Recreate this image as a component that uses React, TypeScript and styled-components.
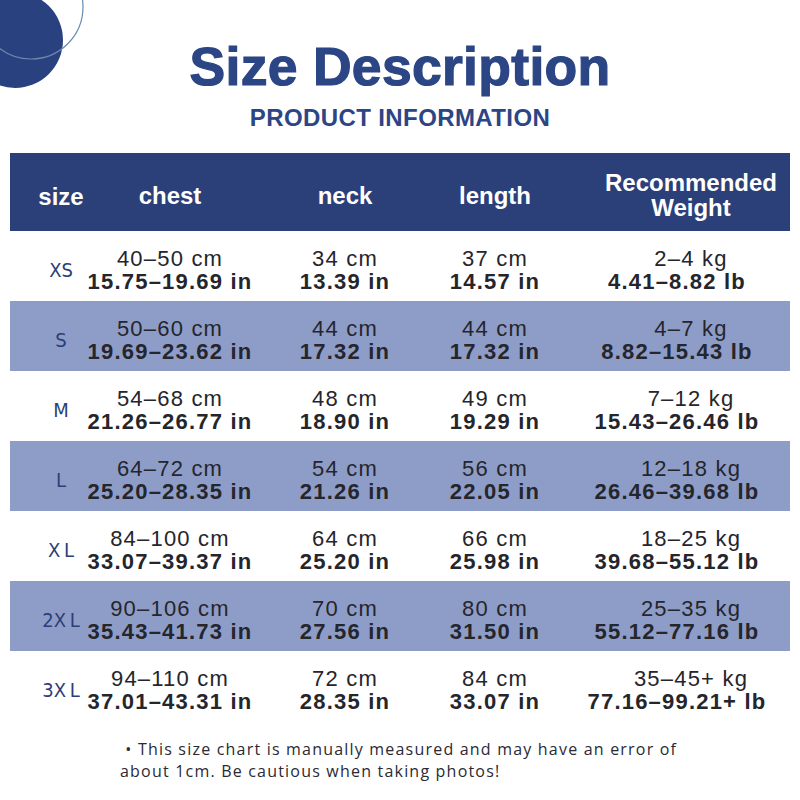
import React from "react";
import styled, { createGlobalStyle } from "styled-components";

const Global = createGlobalStyle`
  html, body { margin: 0; padding: 0; background: #ffffff; }
  body { width: 800px; height: 800px; overflow: hidden; font-family: "Liberation Sans", Arial, sans-serif; }
`;

const Page = styled.div`
  position: relative;
  width: 800px;
  height: 800px;
  background: #ffffff;
  display: flex;
  flex-direction: column;
  align-items: stretch;
`;

const Deco = styled.svg`
  position: absolute;
  left: 0;
  top: 0;
`;

const Title = styled.h1`
  margin: 37px 0 0;
  height: 60px;
  line-height: 60px;
  text-align: center;
  font-family: "Liberation Sans", Arial, sans-serif;
  font-weight: 700;
  font-size: 53.5px;
  color: #2b4585;
  -webkit-text-stroke: 1.2px #2b4585;
  letter-spacing: 0.3px;
`;

const Subtitle = styled.h2`
  margin: 7px 0 0;
  height: 28px;
  line-height: 28px;
  text-align: center;
  font-family: "Liberation Sans", Arial, sans-serif;
  font-weight: 700;
  font-size: 24px;
  letter-spacing: 0.4px;
  color: #2b4585;
`;

const Table = styled.div`
  margin: 21px 10px 0;
  display: flex;
  flex-direction: column;
`;

const cols = "102px 116px 234px 66px 1fr";

const HeadRow = styled.div`
  display: grid;
  grid-template-columns: ${cols};
  height: 78px;
  box-sizing: border-box;
  padding-top: 6px;
  align-items: center;
  background: #2b3f78;
`;

const HeadCell = styled.div<{ $pad?: number; $dy?: number }>`
  display: flex;
  flex-direction: column;
  align-items: center;
  padding-left: ${(p) => p.$pad ?? 0}px;
  padding-top: ${(p) => p.$dy ?? 0}px;
  color: #ffffff;
  font-family: "Liberation Sans", Arial, sans-serif;
  font-weight: 700;
  font-size: 24px;
  line-height: 25px;
  white-space: nowrap;
`;

const Row = styled.div<{ $shaded: boolean }>`
  display: grid;
  grid-template-columns: ${cols};
  height: 70px;
  box-sizing: border-box;
  padding-top: 8px;
  align-items: center;
  background: ${(p) => (p.$shaded ? "#8e9dc8" : "#ffffff")};
`;

const SizeLabel = styled.div`
  text-align: center;
  font-family: "Liberation Sans Narrow", "DejaVu Sans Condensed", "Liberation Sans", sans-serif;
  font-stretch: condensed;
  font-size: 20px;
  color: #2b3f78;
  white-space: pre;
`;

const Cell = styled.div<{ $pad?: number }>`
  display: flex;
  flex-direction: column;
  align-items: center;
  padding-left: ${(p) => p.$pad ?? 0}px;
  font-family: "Liberation Sans", Arial, sans-serif;
  font-size: 22px;
  line-height: 23px;
  letter-spacing: 1.2px;
  color: #25252c;
  white-space: nowrap;
`;

const Metric = styled.span<{ $shift?: number }>`
  font-weight: 400;
  padding-left: ${(p) => p.$shift ?? 0}px;
`;

const Imperial = styled.span`
  font-weight: 700;
`;

const Footer = styled.div`
  margin: 17px 0 0 120px;
  display: flex;
  flex-direction: column;
  font-family: "Open Sans", "Liberation Sans", sans-serif;
  font-size: 16px;
  line-height: 22px;
  letter-spacing: 1.2px;
  color: #2a2a35;
  white-space: nowrap;
`;

const FootLine = styled.span``;

type Data = {
  size: string;
  chest: [string, string];
  neck: [string, string];
  length: [string, string];
  weight: [string, string];
};

const rows: Data[] = [
  { size: "XS", chest: ["40–50 cm", "15.75–19.69 in"], neck: ["34 cm", "13.39 in"], length: ["37 cm", "14.57 in"], weight: ["2–4 kg", "4.41–8.82 lb"] },
  { size: "S", chest: ["50–60 cm", "19.69–23.62 in"], neck: ["44 cm", "17.32 in"], length: ["44 cm", "17.32 in"], weight: ["4–7 kg", "8.82–15.43 lb"] },
  { size: "M", chest: ["54–68 cm", "21.26–26.77 in"], neck: ["48 cm", "18.90 in"], length: ["49 cm", "19.29 in"], weight: ["7–12 kg", "15.43–26.46 lb"] },
  { size: "L", chest: ["64–72 cm", "25.20–28.35 in"], neck: ["54 cm", "21.26 in"], length: ["56 cm", "22.05 in"], weight: ["12–18 kg", "26.46–39.68 lb"] },
  { size: "X\u2009L", chest: ["84–100 cm", "33.07–39.37 in"], neck: ["64 cm", "25.20 in"], length: ["66 cm", "25.98 in"], weight: ["18–25 kg", "39.68–55.12 lb"] },
  { size: "2X\u2009L", chest: ["90–106 cm", "35.43–41.73 in"], neck: ["70 cm", "27.56 in"], length: ["80 cm", "31.50 in"], weight: ["25–35 kg", "55.12–77.16 lb"] },
  { size: "3X\u2009L", chest: ["94–110 cm", "37.01–43.31 in"], neck: ["72 cm", "28.35 in"], length: ["84 cm", "33.07 in"], weight: ["35–45+ kg", "77.16–99.21+ lb"] },
];

function Pair({ v, pad, shift }: { v: [string, string]; pad?: number; shift?: number }) {
  return (
    <Cell $pad={pad}>
      <Metric $shift={shift}>{v[0]}</Metric>
      <Imperial>{v[1]}</Imperial>
    </Cell>
  );
}

export default function App() {
  return (
    <>
      <Global />
      <Page>
        <Deco width="100" height="100" viewBox="0 0 100 100">
          <circle cx="15" cy="40" r="48" fill="#2a4180" />
          <circle cx="31" cy="7" r="52" fill="none" stroke="#6a8ab0" strokeWidth="1.2" />
        </Deco>
        <Title>Size Description</Title>
        <Subtitle>PRODUCT INFORMATION</Subtitle>
        <Table>
          <HeadRow>
            <HeadCell $dy={3}>size</HeadCell>
            <HeadCell>chest</HeadCell>
            <HeadCell>neck</HeadCell>
            <HeadCell>length</HeadCell>
            <HeadCell $pad={64}>
              <span>Recommended</span>
              <span>Weight</span>
            </HeadCell>
          </HeadRow>
          {rows.map((r, i) => (
            <Row key={r.size} $shaded={i % 2 === 1}>
              <SizeLabel>{r.size}</SizeLabel>
              <Pair v={r.chest} />
              <Pair v={r.neck} />
              <Pair v={r.length} />
              <Pair v={r.weight} pad={36} shift={28} />
            </Row>
          ))}
        </Table>
        <Footer>
          <FootLine>{"\u00a0• This size chart is manually measured and may have an error of"}</FootLine>
          <FootLine>about 1cm. Be cautious when taking photos!</FootLine>
        </Footer>
      </Page>
    </>
  );
}
